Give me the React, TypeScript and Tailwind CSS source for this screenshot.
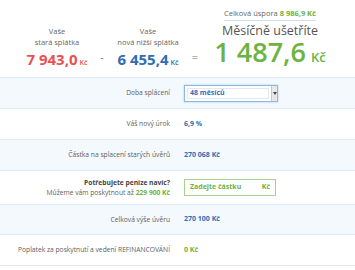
import React from "react";

const font = { fontFamily: '"Open Sans", "Noto Sans", sans-serif' };

function Row({
  label,
  children,
  shaded,
  h,
}: {
  label: React.ReactNode;
  children?: React.ReactNode;
  shaded?: boolean;
  h: string;
}) {
  return (
    <div
      className={`flex items-center border-b border-[#dfeaf6] ${h} ${
        shaded ? "bg-[#f4f9fe]" : "bg-white"
      }`}
    >
      <div className="w-[170px] shrink-0 text-right text-[6.7px] leading-[10px] text-[#606060]">
        {label}
      </div>
      <div className="pl-[14px] flex items-center">{children}</div>
    </div>
  );
}

export default function App() {
  return (
    <div className="w-[355px] h-[270px] bg-white overflow-hidden" style={font}>
      {/* Top summary */}
      <div className="h-[77px] flex">
        <div className="ml-[20px] w-[74px] flex flex-col items-center pt-[26px]">
          <div className="text-[7.5px] leading-[11px] text-[#666] text-center whitespace-nowrap">
            Vaše
            <br />
            stará splátka
          </div>
          <div className="mt-[1px] flex items-baseline whitespace-nowrap text-[#e8524f]">
            <span className="text-[15px] font-bold leading-[20px]">7 943,0</span>
            <span className="ml-[2px] text-[7px] font-semibold">Kč</span>
          </div>
        </div>
        <div className="w-[16px] pt-[50px] text-center text-[10px] text-[#777]">-</div>
        <div className="w-[76px] flex flex-col items-center pt-[26px]">
          <div className="text-[7.5px] leading-[11px] text-[#666] text-center whitespace-nowrap">
            Vaše
            <br />
            nová nižší splátka
          </div>
          <div className="mt-[1px] flex items-baseline whitespace-nowrap text-[#2f6db5]">
            <span className="text-[15px] font-bold leading-[20px]">6 455,4</span>
            <span className="ml-[2px] text-[7px] font-semibold">Kč</span>
          </div>
        </div>
        <div className="w-[18px] pt-[49px] text-center text-[11px] text-[#777]">=</div>
        <div className="w-[132px] flex flex-col items-center pt-[8px]">
          <div className="text-[7.5px] leading-[11px] text-[#666] whitespace-nowrap border-b border-[#cfe0f2] pb-[1px]">
            Celková úspora{" "}
            <span className="font-bold text-[#6cb342]">8 986,9 Kč</span>
          </div>
          <div className="mt-[3px] text-[12.5px] leading-[14px] font-medium text-[#555] whitespace-nowrap">
            Měsíčně ušetříte
          </div>
          <div className="flex items-baseline whitespace-nowrap text-[#6cb342]">
            <span className="text-[27px] font-semibold leading-[28px]">1 487,6</span>
            <span className="ml-[5px] text-[13px] font-semibold">Kč</span>
          </div>
        </div>
      </div>

      <div className="border-t border-[#dfeaf6]">
        <Row label="Doba splácení" shaded h="h-[31px]">
          <div className="flex h-[17px] w-[94px] border border-[#8db8e4] bg-white shadow-[0_0_2px_rgba(120,170,220,0.6)]">
            <div className="flex-1 m-[2px] border border-[#e2e8ef] flex items-center pl-[2px] text-[7px] font-bold text-[#2f6db5]">
              48 měsíců
            </div>
            <div className="w-[6px] bg-[#e8e8e8] border-l border-[#c8c8c8] flex items-center justify-center">
              <div className="w-0 h-0 border-l-[2px] border-r-[2px] border-t-[3px] border-l-transparent border-r-transparent border-t-[#444]" />
            </div>
          </div>
        </Row>
        <Row label="Váš nový úrok" h="h-[31px]">
          <span className="text-[7px] font-bold text-[#2f6db5]">6,9 %</span>
        </Row>
        <Row label="Částka na splacení starých úvěrů" shaded h="h-[31px]">
          <span className="text-[7px] font-bold text-[#2f6db5]">270 068 Kč</span>
        </Row>
        <Row
          label={
            <>
              <div className="font-bold text-[#444]">Potřebujete peníze navíc?</div>
              <div>
                Můžeme vám poskytnout až{" "}
                <span className="font-bold text-[#6cb342]">229 900 Kč</span>
              </div>
            </>
          }
          h="h-[34px]"
        >
          <div className="flex items-center justify-between h-[17px] w-[92px] border border-[#a6d18e] px-[5px] text-[7px] font-bold text-[#6cb342]">
            <span>Zadejte částku</span>
            <span>Kč</span>
          </div>
        </Row>
        <Row label="Celková výše úvěru" shaded h="h-[30px]">
          <span className="text-[7px] font-bold text-[#2f6db5]">270 100 Kč</span>
        </Row>
        <Row label="Poplatek za poskytnutí a vedení REFINANCOVÁNÍ" h="h-[31px]">
          <span className="text-[7px] font-bold text-[#6cb342]">0 Kč</span>
        </Row>
      </div>
    </div>
  );
}
